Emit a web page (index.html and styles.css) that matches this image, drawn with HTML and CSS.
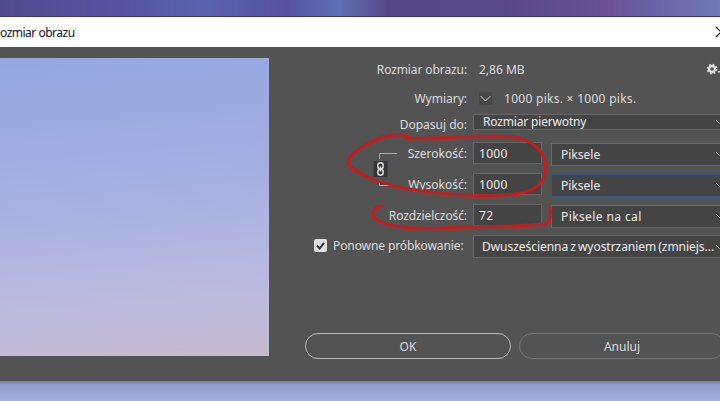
FILE: index.html
```
<!DOCTYPE html>
<html lang="pl">
<head>
    <meta charset="UTF-8">
    <meta name="viewport" content="width=device-width, initial-scale=1.0">
    <title>Rozmiar obrazu</title>
    <link rel="stylesheet" href="styles.css">
</head>
<body>
    <div class="backdrop-top"></div>
    <div class="dialog">
        <div class="titlebar">
            <span class="title">ozmiar obrazu</span>
            <svg class="close" width="12" height="12" viewBox="0 0 12 12"><path d="M1 1l10 10M11 1L1 11"/></svg>
        </div>
        <div class="content">
            <div class="preview"></div>
            <div class="panel">
                <div class="row row-size">
                    <span class="label tight">Rozmiar obrazu:</span>
                    <span class="value size">2,86 MB</span>
                    <svg class="gear" width="14" height="12" viewBox="0 0 14 12">
                        <circle class="teeth" cx="6" cy="6" r="4.3"/>
                        <circle class="ring" cx="6" cy="6" r="3"/>
                        <path class="dot" d="M12 8h2v1.5h-2z"/>
                    </svg>
                </div>
                <div class="row row-dims">
                    <span class="label">Wymiary:</span>
                    <span class="toggle"><svg width="13" height="13" viewBox="0 0 13 13"><path d="M1.5 4l5 5 5-5"/></svg></span>
                    <span class="value dims">1000 piks. × 1000 piks.</span>
                </div>
                <div class="row row-fit">
                    <span class="label">Dopasuj do:</span>
                    <div class="select fit"><span>Rozmiar pierwotny</span><svg class="arrow" width="9" height="6" viewBox="0 0 9 6"><path d="M1 1l3.5 3.5L8 1"/></svg></div>
                </div>
                <div class="linked">
                    <svg class="chain" width="26" height="62" viewBox="0 0 26 62">
                        <path class="bracket" d="M25 15.500H7.500V21M7.500 42v5.500H25"/>
                        <rect class="chain-bg" x="1.500" y="23" width="14" height="16"/>
                        <rect class="chain-link" x="5.800" y="24.800" width="5.400" height="6" rx="2.600"/>
                        <rect class="chain-link" x="5.800" y="31.200" width="5.400" height="6" rx="2.600"/>
                        <path class="chain-link" d="M8.500 28.500v5"/>
                    </svg>
                    <div class="pair">
                        <div class="row">
                            <span class="label">Szerokość:</span>
                            <div class="input">1000</div>
                            <div class="select unit"><span>Piksele</span><svg class="arrow" width="9" height="6" viewBox="0 0 9 6"><path d="M1 1l3.5 3.5L8 1"/></svg></div>
                        </div>
                        <div class="row">
                            <span class="label">Wysokość:</span>
                            <div class="input">1000</div>
                            <div class="select unit active"><span>Piksele</span><svg class="arrow" width="9" height="6" viewBox="0 0 9 6"><path d="M1 1l3.5 3.5L8 1"/></svg></div>
                        </div>
                    </div>
                </div>
                <div class="row">
                    <span class="label tight">Rozdzielczość:</span>
                    <div class="input">72</div>
                    <div class="select unit"><span class="per-inch">Piksele na cal</span><svg class="arrow" width="9" height="6" viewBox="0 0 9 6"><path d="M1 1l3.5 3.5L8 1"/></svg></div>
                </div>
                <div class="row row-resample">
                    <div class="label resample">
                        <svg width="13" height="13" viewBox="0 0 13 13"><rect width="13" height="13" rx="2"/><path d="M3 6.500l2.700 3L10 3.800"/></svg>
                        <span>Ponowne próbkowanie:</span>
                    </div>
                    <div class="select method"><span>Dwusześcienna z wyostrzaniem (zmniejs...</span><svg class="arrow" width="9" height="6" viewBox="0 0 9 6"><path d="M1 1l3.5 3.5L8 1"/></svg></div>
                </div>
                <div class="buttons">
                    <div class="button primary">OK</div>
                    <div class="button">Anuluj</div>
                </div>
            </div>
        </div>
    </div>
    <div class="backdrop-bottom"></div>

    <!-- red marker lines over the form -->
    <svg class="marker" width="720" height="401" viewBox="0 0 720 401">
        <path d="M407 138C430 139 460 136 492 136C520 135 535 141 543 155C549 170 544 184 531 190C516 196 490 196 465 195C430 193 392 188 368 177C355 171 347 166 348 160C353 150 368 143 382 137C393 134 400 134 409 136"/>
        <path d="M382 206C373 206 370 214 376 219C388 227 412 229 440 228C475 226 515 227 545 224C551 222 551 214 550 207"/>
    </svg>
</body>
</html>
```
FILE: styles.css
```
body {
    margin: 0;
    width: 720px;
    height: 401px;
    overflow: hidden;
    font-family: "Noto Sans", sans-serif;
    font-size: 12px;
    color: #dedede;
}
svg {
    flex-shrink: 0;
    fill: none;
}
.backdrop-top {
    height: 16px;
    background: linear-gradient(90deg, #504b90 0%, #5654a0 17%, #5b62ad 28%, #5752a0 40%, #6070b4 47%, #544888 54%, #57488a 70%, #695194 84%, #6b66a9 92%, #7078b5 100%);
    border-bottom: 1px solid #403d65;
}
.dialog {
    height: 364px;
    background: #535353;
}
.titlebar {
    display: flex;
    align-items: center;
    justify-content: space-between;
    width: 727px;
    height: 30px;
    background: #fff;
    color: #15101c;
}
.title {
    letter-spacing: -0.5px;
}
.close {
    stroke: #111;
    stroke-width: 1.2;
}
.content {
    display: flex;
    height: 334px;
}
.preview {
    flex-shrink: 0;
    width: 269px;
    height: 298px;
    margin-top: 11px;
    background: linear-gradient(175deg, #96a7e0 0%, #a2ade2 35%, #b2b7e0 65%, #bfbbdd 84%, #c5bace 100%);
}
.panel {
    display: flex;
    flex-shrink: 0;
    flex-direction: column;
    width: 462px;
    padding-top: 7px;
}
.row {
    display: flex;
    align-items: center;
    height: 31px;
}
.label {
    flex-shrink: 0;
    width: 198px;
    margin-right: 6px;
    text-align: right;
    white-space: nowrap;
}
.tight {
    letter-spacing: -0.1px;
}
.value {
    white-space: nowrap;
}
.row-size {
    height: 30px;
}
.size {
    width: 227px;
    margin-left: 6px;
}
.gear .teeth {
    stroke: #dcdcdc;
    stroke-width: 2.2;
    stroke-dasharray: 1.7 1.677;
}
.gear .ring {
    stroke: #dcdcdc;
    stroke-width: 2.4;
}
.gear .dot {
    fill: #dcdcdc;
}
.row-dims {
    height: 28px;
}
.toggle {
    display: flex;
    margin: 0 12px 0 6px;
    background: #484848;
    stroke: #ccc;
}
.dims {
    letter-spacing: 0.28px;
}
.row-fit {
    height: 26px;
}
.row-fit .label {
    padding-bottom: 2px;
}
.select {
    display: flex;
    box-sizing: border-box;
    align-items: center;
    justify-content: space-between;
    height: 23px;
    padding: 0 0 0 9px;
    border: 1px solid #686868;
    background: #444;
    color: #eee;
    white-space: nowrap;
}
.fit {
    width: 252px;
    height: 16px;
    margin-bottom: 6px;
    line-height: 14px;
    letter-spacing: -0.17px;
}
.arrow {
    stroke: #bbb;
}
.linked {
    display: flex;
    padding-left: 103px;
}
.linked .label {
    width: 69px;
}
.bracket {
    stroke: #a8a8a8;
}
.chain-bg {
    fill: #34343a;
}
.chain-link {
    stroke: #ddd;
    stroke-width: 1.5;
}
.input {
    box-sizing: border-box;
    width: 69px;
    height: 22px;
    margin: 0 9px 1px 0;
    padding-left: 5px;
    border: 1px solid #686868;
    background: #444;
    color: #eee;
    letter-spacing: 0.3px;
    line-height: 21px;
}
.unit {
    width: 174px;
    margin-top: 1px;
}
.per-inch {
    letter-spacing: 0.4px;
}
.active {
    border: 1px solid #2b5b8e;
}
.resample {
    display: flex;
    align-items: center;
    gap: 6px;
    width: 153px;
    padding: 0 0 2px 45px;
    letter-spacing: -0.1px;
}
.resample rect {
    fill: #dedede;
}
.resample path {
    stroke: #333;
    stroke-width: 2;
}
.method {
    width: 252px;
    padding-left: 8px;
    letter-spacing: -0.04px;
    word-spacing: -1px;
}
.buttons {
    display: flex;
    gap: 8px;
    margin: 71px 0 0 36px;
}
.button {
    box-sizing: border-box;
    width: 206px;
    height: 26px;
    border: 1px solid #757575;
    border-radius: 13px;
    line-height: 25px;
    text-align: center;
}
.primary {
    border: 1.5px solid #bcbcbc;
}
.backdrop-bottom {
    height: 20px;
    background: linear-gradient(#7680ac 0, #8f9bc9 4px, #a5b0df 100%);
}
.marker {
    position: absolute;
    top: 0;
    left: 0;
    stroke: #c61c1c;
    stroke-width: 3;
    stroke-linecap: round;
}
```
